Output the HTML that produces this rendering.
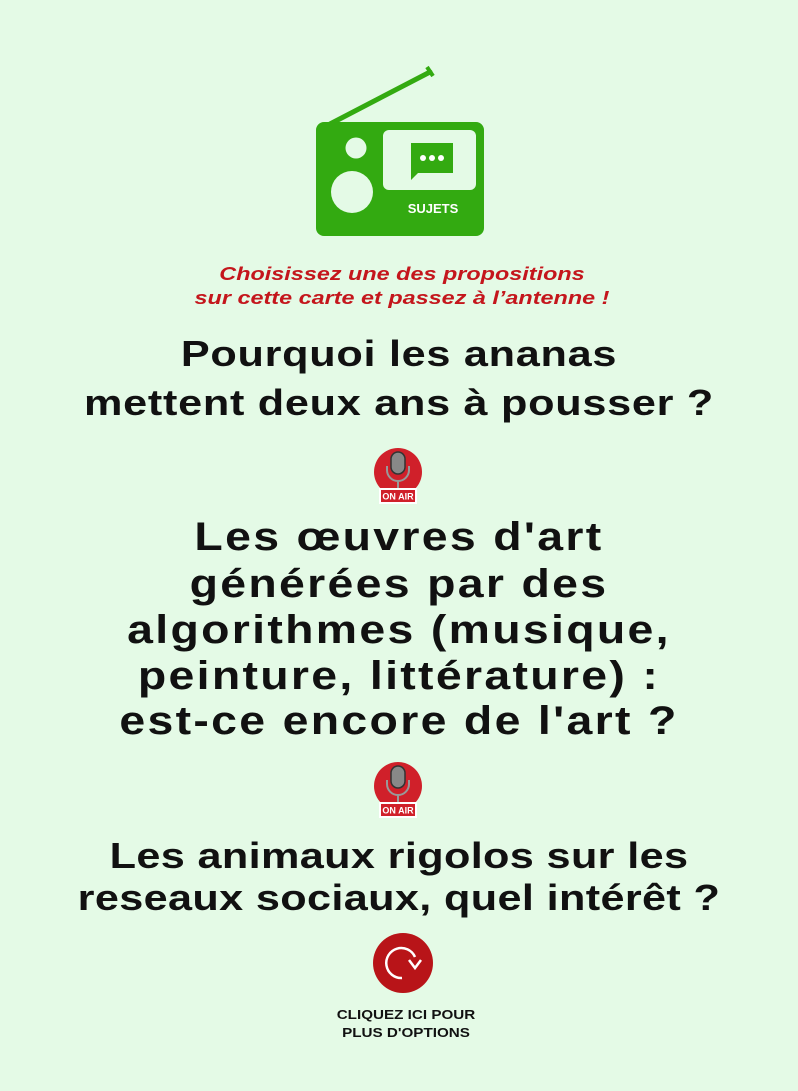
<!DOCTYPE html>
<html><head><meta charset="utf-8"><style>
body{margin:0;background:#e4fae6;width:798px;height:1091px;position:relative;overflow:hidden;font-family:"Liberation Sans",sans-serif}
.l{position:absolute;left:0;width:798px;text-align:center;white-space:nowrap;color:#111;font-weight:bold;transform-origin:center}
.r{color:#c4161c;font-style:italic;font-size:18px;left:3px;transform:scaleX(1.3)}
.h1{font-size:36px;letter-spacing:.6px;transform:scaleX(1.2)}
.h2{font-size:40px;letter-spacing:2px;transform:scaleX(1.16)}
.h3{font-size:36px;letter-spacing:.3px;transform:scaleX(1.2)}
.s{font-size:13px;left:7px;transform:scaleX(1.17)}
</style></head><body>
<svg style="position:absolute;left:0;top:0" width="798" height="260">
<line x1="330" y1="124" x2="430" y2="72" stroke="#33aa11" stroke-width="5" stroke-linecap="round"/>
<line x1="427" y1="67" x2="433" y2="76" stroke="#33aa11" stroke-width="4"/>
<rect x="316" y="122" width="168" height="114" rx="8" fill="#33aa11"/>
<rect x="383" y="130" width="93" height="60" rx="6" fill="#e4fae6"/>
<path d="M411 143h42v30h-35l-7 7z" fill="#33aa11"/>
<circle cx="423" cy="158" r="3" fill="#fff"/><circle cx="432" cy="158" r="3" fill="#fff"/><circle cx="441" cy="158" r="3" fill="#fff"/>
<circle cx="356" cy="148" r="10.5" fill="#e4fae6"/>
<circle cx="352" cy="192" r="21" fill="#e4fae6"/>
<text x="433" y="213" fill="#fff" font-family="Liberation Sans" font-weight="bold" font-size="13" text-anchor="middle">SUJETS</text>
</svg>
<div class="l r" style="top:264px">Choisissez une des propositions</div>
<div class="l r" style="top:288px">sur cette carte et passez à l’antenne !</div>
<div class="l h1" style="top:333px">Pourquoi les ananas</div>
<div class="l h1" style="top:382px">mettent deux ans à pousser ?</div>
<svg style="position:absolute;left:370px;top:446px" width="58" height="60">
<circle cx="28" cy="26" r="24" fill="#d0202a"/>
<rect x="21" y="6" width="14" height="22" rx="7" fill="#888" stroke="#333" stroke-width="1.5"/>
<path d="M17 20v4a11 11 0 0 0 22 0v-4" fill="none" stroke="#999" stroke-width="2"/>
<line x1="28" y1="35" x2="28" y2="44" stroke="#999" stroke-width="2"/>
<rect x="9" y="42" width="38" height="16" fill="#fff"/>
<rect x="11" y="44" width="34" height="12" fill="#d0202a"/>
<text x="28" y="53.5" fill="#fff" font-family="Liberation Sans" font-weight="bold" font-size="9" text-anchor="middle">ON AIR</text>
</svg>
<div class="l h2" style="top:515px">Les œuvres d'art</div>
<div class="l h2" style="top:562px">générées par des</div>
<div class="l h2" style="top:608px">algorithmes (musique,</div>
<div class="l h2" style="top:654px">peinture, littérature) :</div>
<div class="l h2" style="top:699px">est-ce encore de l'art ?</div>
<svg style="position:absolute;left:370px;top:760px" width="58" height="60">
<circle cx="28" cy="26" r="24" fill="#d0202a"/>
<rect x="21" y="6" width="14" height="22" rx="7" fill="#888" stroke="#333" stroke-width="1.5"/>
<path d="M17 20v4a11 11 0 0 0 22 0v-4" fill="none" stroke="#999" stroke-width="2"/>
<line x1="28" y1="35" x2="28" y2="44" stroke="#999" stroke-width="2"/>
<rect x="9" y="42" width="38" height="16" fill="#fff"/>
<rect x="11" y="44" width="34" height="12" fill="#d0202a"/>
<text x="28" y="53.5" fill="#fff" font-family="Liberation Sans" font-weight="bold" font-size="9" text-anchor="middle">ON AIR</text>
</svg>
<div class="l h3" style="top:835px">Les animaux rigolos sur les</div>
<div class="l h3" style="top:877px">reseaux sociaux, quel intérêt ?</div>
<svg style="position:absolute;left:372px;top:932px" width="62" height="62">
<circle cx="31" cy="31" r="30" fill="#b81418"/>
<path d="M43 25A15 15 0 1 0 30 46" fill="none" stroke="#fff" stroke-width="2.5"/>
<path d="M37 28l6 8 6-8" fill="none" stroke="#fff" stroke-width="2.5"/>
</svg>
<div class="l s" style="top:1007px">CLIQUEZ ICI POUR</div>
<div class="l s" style="top:1025px">PLUS D'OPTIONS</div>
</body></html>
